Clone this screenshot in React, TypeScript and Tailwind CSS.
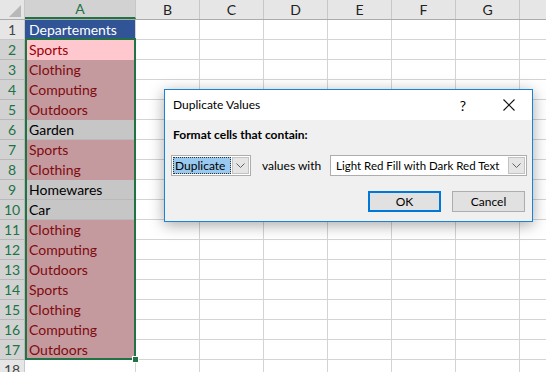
import React from "react"

type Kind = "title" | "active" | "dup" | "plain" | "empty"

const rows: { t: string; k: Kind }[] = [
  { t: "Departements", k: "title" },
  { t: "Sports", k: "active" },
  { t: "Clothing", k: "dup" },
  { t: "Computing", k: "dup" },
  { t: "Outdoors", k: "dup" },
  { t: "Garden", k: "plain" },
  { t: "Sports", k: "dup" },
  { t: "Clothing", k: "dup" },
  { t: "Homewares", k: "plain" },
  { t: "Car", k: "plain" },
  { t: "Clothing", k: "dup" },
  { t: "Computing", k: "dup" },
  { t: "Outdoors", k: "dup" },
  { t: "Sports", k: "dup" },
  { t: "Clothing", k: "dup" },
  { t: "Computing", k: "dup" },
  { t: "Outdoors", k: "dup" },
  { t: "", k: "empty" },
]

const cols = ["B", "C", "D", "E", "F", "G"]

const cellStyle: Record<Kind, string> = {
  title: "bg-[#305496] text-white border-[#305496]",
  active: "bg-[#ffc7ce] text-[#9c0006] border-[#ffc7ce]",
  dup: "bg-[#c49a9e] text-[#7f0a10] border-[#c49a9e]",
  plain: "bg-[#c6c6c6] text-black border-[#bababa]",
  empty: "bg-white text-black border-[#d4d4d4]",
}

function Chevron() {
  return (
    <svg width="9" height="5" viewBox="0 0 9 5">
      <path d="M0.5 0.5 L4.5 4.5 L8.5 0.5" fill="none" stroke="#606060" strokeWidth="1" />
    </svg>
  )
}

function Dialog() {
  return (
    <div className="absolute left-[164px] top-[89px] w-[369px] h-[133px] border border-[#1883d7] bg-[#f0f0f0] shadow-[0_3px_14px_rgba(0,0,0,0.35)] font-['Lato',sans-serif] text-[12px] text-black flex flex-col">
      <div className="h-[30px] bg-white flex items-center pl-[8px]">
        <span className="flex-1">Duplicate Values</span>
        <span className="w-[20px] text-center text-[14px] mr-[30px]">?</span>
        <svg width="12" height="12" viewBox="0 0 12 12" className="mr-[17px]">
          <path d="M0.5 0.5 L11.5 11.5 M11.5 0.5 L0.5 11.5" stroke="#111" strokeWidth="1.1" />
        </svg>
      </div>
      <div className="px-[8px] pt-[6px] font-bold h-[35px]">Format cells that contain:</div>
      <div className="flex items-center h-[21px] pl-[6px]">
        <div className="w-[80px] h-[21px] border border-[#adadad] bg-white flex items-center p-[1px]">
          <div className="flex-1 h-full bg-[#99c9ef] border border-dotted border-[#333] flex items-center pl-[1px]">Duplicate</div>
          <div className="w-[17px] h-full bg-[#e5e5e5] border border-[#c2c2c2] flex items-center justify-center ml-[1px]">
            <Chevron />
          </div>
        </div>
        <span className="ml-[11px] w-[68px]">values with</span>
        <div className="w-[197px] h-[21px] border border-[#adadad] bg-white flex items-center p-[1px]">
          <div className="flex-1 min-w-0 pl-[4px] whitespace-nowrap overflow-hidden text-[11.5px]">Light Red Fill with Dark Red Text</div>
          <div className="w-[17px] h-full shrink-0 bg-[#e5e5e5] border border-[#c2c2c2] flex items-center justify-center">
            <Chevron />
          </div>
        </div>
      </div>
      <div className="flex justify-end gap-[11px] pr-[7px] mt-[15px]">
        <button className="w-[73px] h-[21px] border-2 border-[#0078d7] bg-[#e1e1e1] flex items-center justify-center">OK</button>
        <button className="w-[73px] h-[21px] border border-[#adadad] bg-[#e1e1e1] flex items-center justify-center">Cancel</button>
      </div>
    </div>
  )
}

export default function App() {
  return (
    <div className="relative w-[546px] h-[372px] overflow-hidden bg-white font-['Lato',sans-serif] text-[14px]">
      {/* column headers */}
      <div className="flex h-[20px] bg-[#e6e6e6] border-b border-[#ababab]">
        <div className="w-[25px] h-full border-r border-[#c8c8c8] relative">
          <svg width="12" height="12" viewBox="0 0 12 12" className="absolute right-[3px] bottom-[2px]">
            <path d="M12 0 L12 12 L0 12 Z" fill="#b8b8b8" />
          </svg>
        </div>
        <div className="w-[111px] h-[19px] bg-[#d2d2d2] border-r border-[#c8c8c8] border-b-2 border-b-[#217346] flex items-center justify-center text-[#217346] text-[14px]">A</div>
        {cols.map((c) => (
          <div key={c} className="w-[64px] h-full border-r border-[#c8c8c8] flex items-center justify-center text-[#222] text-[14px]">{c}</div>
        ))}
        <div className="flex-1" />
      </div>

      {rows.map((r, i) => {
        const sel = i >= 1 && i <= 16
        return (
          <div key={i} className="flex h-[20px]">
            <div className={`w-[25px] h-full border-r border-b flex items-center justify-center text-[14px] ${sel ? "bg-[#d2d2d2] text-[#217346] border-[#b8b8b8]" : "bg-[#e6e6e6] text-[#444] border-[#c8c8c8]"}`}>{i + 1}</div>
            <div className={`w-[111px] h-full border-r border-b border-r-[#d4d4d4] pl-[4px] pt-[1px] flex items-center leading-none ${cellStyle[r.k]}`}>{r.t}</div>
            {cols.map((c) => (
              <div key={c} className="w-[64px] h-full border-r border-b border-[#d4d4d4]" />
            ))}
            <div className="flex-1 h-full border-b border-[#d4d4d4]" />
          </div>
        )
      })}

      {/* selection A2:A17 */}
      <div className="absolute left-[25px] top-[38px] w-[111px] h-[322px] border-2 border-[#217346] pointer-events-none" />
      <div className="absolute left-[132px] top-[356px] w-[7px] h-[7px] bg-[#217346] border border-white" />

      <Dialog />
    </div>
  )
}
